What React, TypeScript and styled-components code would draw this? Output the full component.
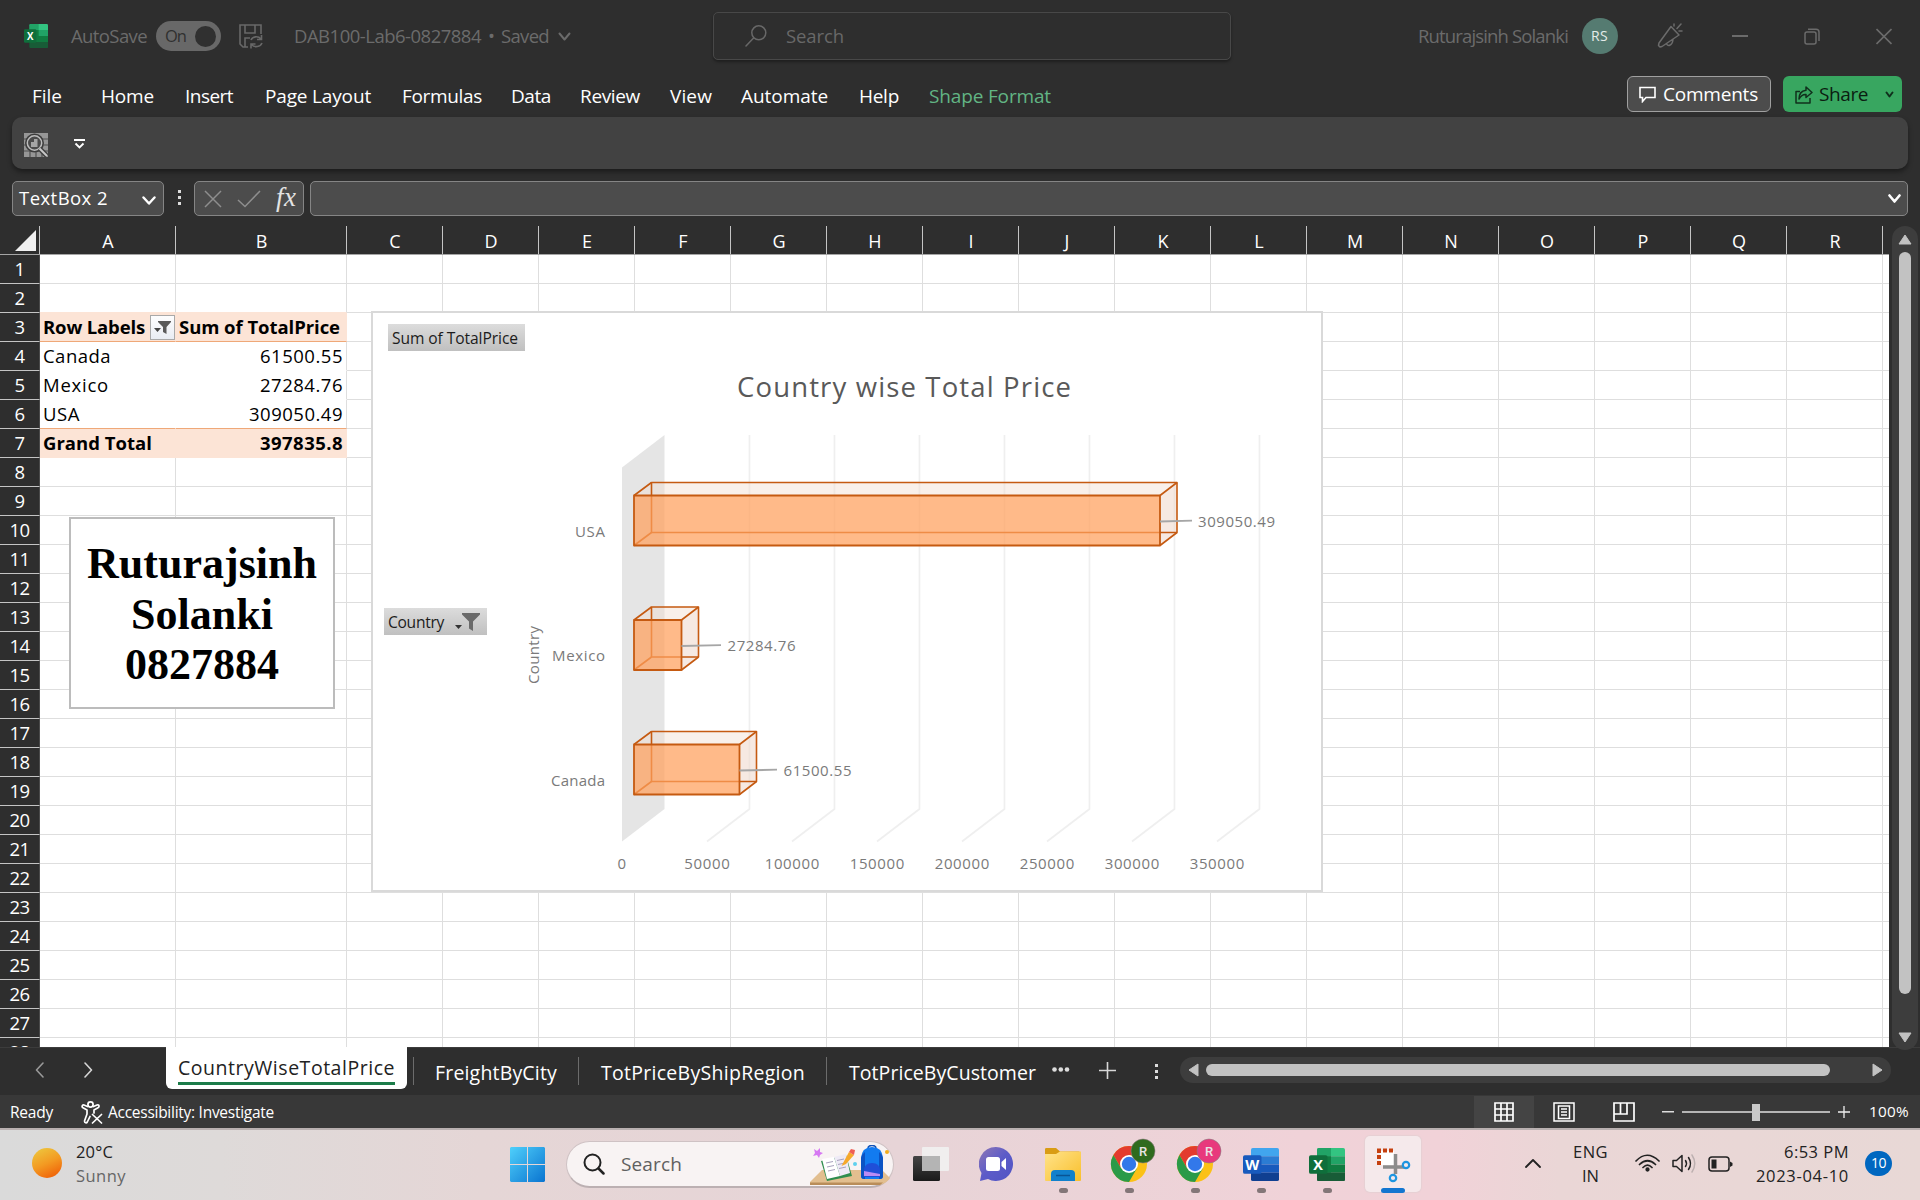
import React, { useLayoutEffect, useRef } from "react";
import styled, { createGlobalStyle, css } from "styled-components";

const UI = `"Open Sans", "Noto Sans", "Liberation Sans", sans-serif`;
const SHEET = `"Open Sans", "Noto Sans", sans-serif`;

const Global = createGlobalStyle`
  * { box-sizing: border-box; }
  html, body { margin: 0; padding: 0; background: #2e2e2e; overflow: hidden; }
  svg { display: block; flex: none; }
`;

/* ---------- text that is tracked to a given width ---------- */

const TextSpan = styled.span<{ $w: number; $size: number; $gap: number; $weight: number; $color: string; $font: string }>`
  display: block;
  flex: none;
  width: ${p => p.$w}px;
  margin-left: ${p => p.$gap}px;
  font-family: ${p => p.$font};
  font-size: ${p => p.$size}px;
  font-weight: ${p => p.$weight};
  color: ${p => p.$color};
  white-space: nowrap;
  line-height: 1.3;
`;

type LabelProps = { w: number; size?: number; gap?: number; weight?: number; color?: string; font?: string; children: string };

function Label({ w, size = 18.5, gap = 0, weight = 400, color = "#fff", font = UI, children }: LabelProps) {
  const ref = useRef<HTMLSpanElement>(null);
  useLayoutEffect(() => {
    const el = ref.current!;
    el.style.letterSpacing = "0px";
    const natural = el.getBoundingClientRect().width;
    el.style.letterSpacing = `${(w - natural) / children.length}px`;
  }, [w, children]);
  return (
    <TextSpan $w={w} $size={size} $gap={gap} $weight={weight} $color={color} $font={font}>
      <span ref={ref}>{children}</span>
    </TextSpan>
  );
}

/* ---------- window chrome ---------- */

const Screen = styled.div`
  width: 1920px;
  height: 1200px;
  display: flex;
  flex-direction: column;
  background: #2e2e2e;
  font-family: ${UI};
  overflow: hidden;
`;

const TitleBar = styled.header`
  height: 72px;
  display: flex;
  align-items: center;
  padding-left: 24px;
`;

const Spaced = styled.div<{ $gap: number; $dy?: number }>`
  flex: none;
  margin-left: ${p => p.$gap}px;
  padding-top: ${p => p.$dy ?? 0}px;
`;

const Toggle = styled.div`
  width: 65px;
  height: 30px;
  margin-left: 9px;
  border-radius: 15px;
  background: #686868;
  display: flex;
  align-items: center;
  flex: none;
`;

const Knob = styled.i`
  width: 21px;
  height: 21px;
  margin-left: 9px;
  border-radius: 50%;
  background: #303030;
`;

const SearchBox = styled.div`
  width: 518px;
  height: 48px;
  margin-left: 142px;
  flex: none;
  border: 1px solid #484848;
  border-radius: 5px;
  box-shadow: 0 2px 3px rgba(0, 0, 0, 0.35);
  display: flex;
  align-items: center;
  padding-left: 31px;
`;

const Avatar = styled.div`
  width: 36px;
  height: 36px;
  margin-left: 14px;
  border-radius: 50%;
  background: #557b71;
  display: flex;
  align-items: center;
  flex: none;
`;

const MenuBar = styled.nav`
  height: 45px;
  display: flex;
  align-items: flex-start;
  padding-left: 32px;
`;

const MenuItem = styled.div`
  padding-top: 12px;
  display: flex;
`;

const PillButton = styled.div<{ $w: number; $green?: boolean; $gap: number; $pad: number }>`
  width: ${p => p.$w}px;
  height: 36px;
  margin: 4px 0 0 ${p => p.$gap}px;
  padding-left: ${p => p.$pad}px;
  padding-top: 1px;
  display: flex;
  align-items: center;
  flex: none;
  border-radius: 6px;
  background: ${p => (p.$green ? "#38a660" : "#4c4c4c")};
  border: ${p => (p.$green ? "none" : "1px solid #a0a0a0")};
`;

const QuickBar = styled.div`
  height: 52px;
  margin: 0 12px;
  padding-left: 12px;
  display: flex;
  align-items: center;
  background: #424242;
  border-radius: 10px;
  box-shadow: 0 3px 5px rgba(0, 0, 0, 0.4);
`;

const FormulaRow = styled.div`
  height: 57px;
  padding: 12px 12px 10px;
  display: flex;
`;

const Field = styled.div<{ $w?: number }>`
  ${p => (p.$w ? css`width: ${p.$w}px; flex: none;` : css`flex: 1;`)}
  height: 35px;
  border: 1px solid #858585;
  border-radius: 5px;
  background: #4c4c4c;
  display: flex;
  align-items: center;
`;

const FieldDots = styled.div`
  width: 30px;
  padding-left: 1px;
  display: grid;
  place-items: center;
`;

const Fx = styled.span`
  margin: -4px 0 0 15px;
  font: italic 27px/30px "Liberation Serif", serif;
  letter-spacing: 0.5px;
  color: #e3e3e3;
`;

/* ---------- sheet ---------- */

const COLS = "ABCDEFGHIJKLMNOPQR".split("");
const TRACKS = "40px 136px 171px repeat(16, 96px) 6px";

const Workspace = styled.div`
  display: flex;
  height: 821px;
  position: relative;
  flex: none;
`;

const Sheet = styled.div`
  width: 1889px;
  height: 821px;
  overflow: hidden;
`;

const HeadRow = styled.div`
  display: grid;
  grid-template-columns: ${TRACKS};
  grid-template-rows: 28px;
  height: 29px;
  border-bottom: 1px solid #a5a5a5;
`;

const HeadCell = styled.div`
  border-right: 1px solid #c4c4c4;
  padding-left: 1px;
  color: #fff;
  font-size: 18px;
  line-height: 31px;
  text-align: center;
  &:first-child { padding-left: 0; }
  &:last-child { border-right: 0; }
`;

const Row = styled.div`
  display: grid;
  grid-template-columns: ${TRACKS};
  grid-template-rows: 29px;
  height: 29px;
  background: #fff;
`;

const RowHead = styled.div`
  background: #2e2e2e;
  color: #fff;
  border-bottom: 1px solid #c4c4c4;
  border-right: 1px solid #4a4a4a;
  font-size: 18.5px;
  line-height: 28px;
  text-align: center;
  letter-spacing: -0.6px;
`;

const Cell = styled.div<{ $fill?: boolean; $bottom?: string; $right?: string; $end?: boolean }>`
  display: flex;
  align-items: center;
  justify-content: ${p => (p.$end ? "flex-end" : "flex-start")};
  padding: 1px 3px 0;
  background: ${p => (p.$fill ? "#fce4d6" : "#fff")};
  border-bottom: 1px solid ${p => p.$bottom ?? "#dedede"};
  border-right: 1px solid ${p => p.$right ?? "#dedede"};
  &:last-child { border-right: 0; }
`;

const FilterButton = styled.div`
  width: 25px;
  height: 25px;
  margin: 0 -4px 0 5px;
  border: 1px solid #a9a9a9;
  background: linear-gradient(#fdfdfe, #e9edf3);
  display: grid;
  place-items: center;
  flex: none;
`;

const ScrollV = styled.div`
  width: 26px;
  height: 824px;
  margin-left: 3px;
  border-radius: 13px;
  background: #3d3d3d;
  display: flex;
  flex-direction: column;
  align-items: center;
  padding-top: 8px;
  z-index: 1;
`;

const ThumbV = styled.div`
  width: 12px;
  height: 742px;
  margin: 7px 0 38px;
  border-radius: 6px;
  background: #c2c2c2;
  flex: none;
`;

const TextBox = styled.div`
  position: absolute;
  left: 69px;
  top: 291px;
  width: 266px;
  height: 192px;
  border: 2px solid #bcbcbc;
  background: #fff;
  display: flex;
  flex-direction: column;
  align-items: center;
  padding-top: 20px;
  font: bold 44px/50.5px "Liberation Serif", serif;
  color: #000;
`;

const ChartFrame = styled.div`
  position: absolute;
  left: 371px;
  top: 85px;
  width: 952px;
  height: 581px;
  border: 2px solid #d9d9d9;
  background: #fff;
`;

const ChartButton = styled.div<{ $x: number; $y: number; $w: number }>`
  position: absolute;
  left: ${p => p.$x}px;
  top: ${p => p.$y}px;
  width: ${p => p.$w}px;
  height: 27px;
  padding: 1px 0 0 4px;
  display: flex;
  align-items: center;
  background: linear-gradient(#dcdcdc, #c0c0c0);
`;

/* ---------- tabs, status ---------- */

const TabBar = styled.div`
  height: 48px;
  display: flex;
  align-items: flex-start;
  background: #2e2e2e;
  border-top: 1px solid #3c3c3c;
`;

const ActiveTab = styled.div`
  width: 241px;
  height: 42px;
  margin: -1px 0 0 66px;
  padding: 8px 12px 0;
  border-radius: 0 0 6px 6px;
  background: #fff;
  flex: none;
`;

const Underline = styled.div`
  height: 3px;
  width: 217px;
  margin-top: 2px;
  background: #1c7c49;
`;

const Divider = styled.i<{ $gap: number }>`
  width: 1px;
  height: 28px;
  margin: 9px 0 0 ${p => p.$gap}px;
  background: #6c6c6c;
  flex: none;
`;

const TabSlot = styled.div`
  padding-top: 12px;
`;

const ScrollH = styled.div`
  width: 711px;
  height: 26px;
  margin: 9px 0 0 21px;
  padding: 0 8px;
  border-radius: 13px;
  background: #3d3d3d;
  display: flex;
  align-items: center;
  flex: none;
`;

const ThumbH = styled.div`
  width: 624px;
  height: 12px;
  margin: 0 42px 0 7px;
  border-radius: 6px;
  background: #c2c2c2;
  flex: none;
`;

const StatusBar = styled.div`
  height: 33px;
  display: flex;
  align-items: center;
  background: #383838;
  padding: 1px 0 0 10px;
`;

const ViewButton = styled.div<{ $on?: boolean }>`
  width: 60px;
  height: 32px;
  display: grid;
  place-items: center;
  background: ${p => (p.$on ? "#444" : "transparent")};
`;

const Slider = styled.div`
  width: 148px;
  height: 17px;
  margin-left: 8px;
  display: grid;
  place-items: center;
  background: linear-gradient(#b5b5b5, #b5b5b5) center / 100% 2px no-repeat;
`;

const Handle = styled.i`
  width: 8px;
  height: 17px;
  background: #c9c9c9;
`;

/* ---------- taskbar ---------- */

const Taskbar = styled.footer`
  height: 72px;
  display: flex;
  border-top: 2px solid #b9b0b0;
  background: linear-gradient(90deg, #dadada 0, #dedad9 220px, #e5d6d6 480px, #e7d4d7 900px, #f0d2d8 1300px, #f1d2d8 1440px, #ead6d6 1560px, #e8d8d6 1920px);
`;

const Sun = styled.div`
  width: 30px;
  height: 30px;
  margin: 18px 0 0 32px;
  border-radius: 50%;
  background: linear-gradient(155deg, #eec23b 10%, #f39a22 50%, #f0690c 85%);
`;

const Lines = styled.div<{ $gap: number; $w: number; $align?: string }>`
  width: ${p => p.$w}px;
  margin-left: ${p => p.$gap}px;
  padding-top: 11px;
  display: flex;
  flex-direction: column;
  gap: 3px;
  align-items: ${p => p.$align ?? "flex-start"};
  flex: none;
`;

const TaskSearch = styled.div`
  width: 328px;
  height: 47px;
  margin: 11px 0 0 21px;
  border: 1px solid #cfc2c4;
  border-bottom: 2px solid #bcb0b2;
  border-radius: 24px;
  background: #f8f3f3;
  display: flex;
  align-items: center;
  padding-left: 16px;
  flex: none;
`;

const TaskApp = styled.div<{ $gap?: number; $w: number; $active?: boolean }>`
  width: ${p => p.$w}px;
  height: 56px;
  margin: 6px 0 0 ${p => p.$gap ?? 0}px;
  display: flex;
  flex-direction: column;
  align-items: center;
  justify-content: space-between;
  flex: none;
  ${p => p.$active && css`
    background: #f5e9eb;
    border-radius: 5px;
    box-shadow: 0 0 1px 1px #e6d0d4;
  `}
`;

const Running = styled.i<{ $active?: boolean }>`
  width: ${p => (p.$active ? 24 : 9)}px;
  height: 5px;
  border-radius: 3px;
  margin-bottom: -1px;
  background: ${p => (p.$active ? "#1376d0" : "#837678")};
`;

const Count = styled.div`
  width: 27px;
  height: 25px;
  margin: 21px 0 0 16px;
  border-radius: 13px;
  background: #0067c0;
  display: grid;
  place-items: center;
`;

/* ---------- icons ---------- */

const Chevron = ({ w, h, color = "#fff", sw = 2, dir = "down" }: { w: number; h: number; color?: string; sw?: number; dir?: string }) => {
  const d = {
    down: `M1.5 1.5L${w / 2} ${h - 1.5}L${w - 1.5} 1.5`,
    up: `M1 ${h - 1}L${w / 2} 1L${w - 1} ${h - 1}`,
    left: `M${w - 1} 1L1.5 ${h / 2}L${w - 1} ${h - 1}`,
    right: `M1 1L${w - 1.5} ${h / 2}L1 ${h - 1}`,
  }[dir];
  return <svg width={w} height={h}><path d={d} fill="none" stroke={color} strokeWidth={sw} strokeLinecap="round" strokeLinejoin="round" /></svg>;
};

const OfficeIcon = ({ w, h, letter, c }: { w: number; h: number; letter: string; c: string[] }) => (
  <svg width={w} height={h} viewBox="0 2 36 32" preserveAspectRatio="none">
    <clipPath id={`sheet${letter}${w}`}><rect x="8" y="2" width="28" height="32" rx="1.8" /></clipPath>
    <g clipPath={`url(#sheet${letter}${w})`}>
      <rect x="8" y="2" width="28" height="8" fill={c[0]} />
      <rect x="8" y="10" width="28" height="8" fill={c[1]} />
      <rect x="8" y="18" width="28" height="8" fill={c[2]} />
      <rect x="8" y="26" width="28" height="8" fill={c[3]} />
      {letter === "X" && <><rect x="8" y="2" width="14" height="8" fill="#21a366" /><rect x="8" y="10" width="14" height="16" fill="#107c41" /><rect x="8" y="26" width="28" height="8" fill="#185c37" /></>}
    </g>
    <rect x="0" y="9" width="18.500" height="18" rx="1.8" fill={c[4]} />
    <text x="9.2" y="23.2" textAnchor="middle" fontFamily="Open Sans, sans-serif" fontWeight="700" fontSize="14.5" fill="#fff">{letter}</text>
  </svg>
);
const XL = ["#33c481", "#21a366", "#107c41", "#185c37", "#0f6e3b"];
const WD = ["#41a5ee", "#2b7cd3", "#185abd", "#103f91", "#185abd"];

const SaveIcon = () => (
  <svg width="24" height="25" fill="none" stroke="#686868" strokeWidth="1.6">
    <path d="M9 23H4L1 20V1H22V10M6 1V9H16V1M6 23V14H11" />
    <path d="M12 16C13.5 12.5 19 11.5 22 15M22.5 11V15.5H18M23 19C21.5 23 15.5 24 12.5 20.5M12 24.5V20H16.5" />
  </svg>
);

const Lens = ({ color, flip, size = 22, sw = 1.5 }: { color: string; flip?: boolean; size?: number; sw?: number }) => (
  <svg width={size} height={size} viewBox="0 0 22 22" fill="none" stroke={color} strokeWidth={sw} strokeLinecap="round">
    {flip ? <><circle cx="13.8" cy="7.8" r="7" /><path d="M8.6 13L1 21" /></> : <><circle cx="9.5" cy="9.5" r="8" /><path d="M15.5 15.5L20.5 20.5" strokeWidth={sw + 0.5} /></>}
  </svg>
);

const Megaphone = () => (
  <svg width="26" height="26" fill="none" stroke="#6b6b6b" strokeWidth="1.5" strokeLinejoin="round" strokeLinecap="round">
    <path d="M14 3.5L22 12L5 23.5L3 24L1.5 22.5L2 20ZM9.5 20.5C10 23.5 15.5 23.5 16 16M17 3V1M20 5.5L24 1M22 8H25" />
  </svg>
);

const ChartLens = () => (
  <svg width="24" height="24" fill="none">
    <rect width="24" height="24" fill="#969696" />
    <path d="M0 6H24M0 12H24M0 18H24M6 18V24M12 18V24M18 18V24" stroke="#505050" strokeWidth="1.2" />
    <circle cx="10.5" cy="10" r="8" fill="#4b4b4b" stroke="#3d3d3d" strokeWidth="3" />
    <circle cx="10.5" cy="10" r="7.2" stroke="#bdbdbd" strokeWidth="1.5" />
    <path d="M7 14V9H10V6H13.5V14Z" fill="#a5a5a5" />
    <path d="M15.5 15.5L23 23" stroke="#424242" strokeWidth="5" />
    <path d="M15.5 15.5L23 23" stroke="#c8c8c8" strokeWidth="2" />
  </svg>
);

const Funnel = ({ w, h, color }: { w: number; h: number; color: string }) => (
  <svg width={w} height={h} viewBox="0 0 18 18"><path d="M0 0H18V1.5L11 8.5V18L7 15.5V8.5L0 1.5Z" fill={color} /></svg>
);

const Access = () => (
  <svg width="22" height="23" fill="none" stroke="#fff" strokeWidth="1.7" strokeLinejoin="round" strokeLinecap="round">
    <circle cx="9.5" cy="3.5" r="2.6" />
    <path d="M6.5 5.5L3 4C1 3.5 .5 6 2 6.8L6 9V13L3.5 20C3.5 22 5.5 22.5 6.3 21L9 15.5M12.5 5.5L16 4C18.5 3.5 18.5 6 17 6.8L13 9V12M11.5 13.5L20.5 22M20.5 13.5L11.5 22" />
  </svg>
);

const Chrome = ({ badge }: { badge: string }) => (
  <svg width="50" height="46" viewBox="0 0 50 46">
    <g transform="translate(21 28)">
      <circle r="18" fill="#fbc116" />
      <path d="M-15.6 -9A18 18 0 0 1 15.6 -9L0 -9L-7.8 4.5Z" fill="#e33b2e" />
      <path d="M-15.6 -9A18 18 0 0 0 0 18L7.8 4.5L-7.8 4.5Z" fill="#2a9a48" />
      <circle r="9" fill="#fff" /><circle r="7.2" fill="#3278ea" />
    </g>
    <circle cx="35" cy="15" r="12" fill={badge} stroke="#8c7a80" strokeWidth=".6" />
    <text x="35" y="19.8" textAnchor="middle" fontFamily="Roboto, sans-serif" fontWeight="500" fontSize="13" fill="#e9e4e4">R</text>
  </svg>
);

const SearchArt = () => (
  <svg width="84" height="42" viewBox="0 0 84 42">
    <path d="M12 25H72L80 33Q77 38 70 40H0V37Z" fill="#e2be8f" />
    <path d="M0 37.5H73L70 40H0Z" fill="#b98d5a" />
    <path d="M11 16L36 10L42 31L17 36Z" fill="#2f8d4e" />
    <path d="M12 14L24 12L30 31L17 34Z" fill="#fff" /><path d="M24 12L36 9L40 28L30 31Z" fill="#eeeaf6" />
    <path d="M16 18L23 16.5M17 22L24 20.5M18 26L25 24.5M27 15.5L34 14M28 19.5L35 18M29 23.5L36 22" stroke="#a7a1bd" strokeWidth="1" />
    <path d="M32 20L39 7L44 10L36 19L31.5 21Z" fill="#f6a92c" /><path d="M39 7L41 4L45 5L44 10Z" fill="#ef5e55" />
    <path d="M4 4L7 6L10 3L10 7L13 8L10 10L9 13L7 10L3 11L5 8Z" fill="#d678f2" />
    <circle cx="45" cy="19" r="2" fill="#5fd0ee" /><circle cx="77" cy="7" r="2" fill="#f3ad1c" />
    <path d="M58 3.500Q58 0.500 62 0.500T66 3.500" fill="none" stroke="#1152b8" strokeWidth="1.6" />
    <path d="M51 13Q52 2 62 2T73 13V31Q73 34 70 34H54Q51 34 51 31Z" fill="#127bf0" />
    <path d="M51 13V31Q51 34 54 34H55V7Q52 9 51 13ZM69 7V34H70Q73 34 73 31V13Q72 9 69 7Z" fill="#0b53c4" />
    <path d="M54 26Q54 18 62 18T70 26V32H54Z" fill="#1f4fd8" /><path d="M54 26L70 29V31H54Z" fill="#b98cf4" />
  </svg>
);

/* ---------- chart ---------- */

const BARS = [
  { name: "USA", nameW: 30, y: 495.5, end: 1160, value: "309050.49", lx: 1192, vx: 1198, vw: 77 },
  { name: "Mexico", nameW: 53, y: 620, end: 681.5, value: "27284.76", lx: 721, vx: 727.5, vw: 68 },
  { name: "Canada", nameW: 54, y: 744.5, end: 739.5, value: "61500.55", lx: 777, vx: 783.5, vw: 68 },
];

const ChartText = styled.text`
  font-family: ${SHEET};
  font-size: 15px;
  fill: #7a7a7a;
`;

const ChartTitle = styled.text`
  font-family: ${SHEET};
  font-size: 27.5px;
  fill: #595959;
`;

const Plot = () => (
  <svg width="948" height="577" viewBox="373 313 948 577">
    <ChartTitle x="737" y="396.5" textLength="334">Country wise Total Price</ChartTitle>
    <path d="M622 467.5L664.5 435V809L622 841.5Z" fill="#e5e5e5" />
    {[1, 2, 3, 4, 5, 6, 7].map(i => (
      <path key={i} d={`M${664 + 85 * i}.5 435V809L${622 + 85 * i} 841.5`} fill="none" stroke="#efefef" strokeWidth="1.7" />
    ))}
    {BARS.map(b => {
      const back = `M651.5 ${b.y - 13}H${b.end + 17}V${b.y + 37}H651.5Z`;
      return (
        <g key={b.name} strokeLinejoin="round">
          <path d={`M634 ${b.y}L651.5 ${b.y - 13}H${b.end + 17}V${b.y + 37}L${b.end} ${b.y + 50}V${b.y}Z`} fill="#f0dccd" fillOpacity=".42" />
          <path d={`M${b.end} ${b.y}L${b.end + 17} ${b.y - 13}V${b.y + 37}L${b.end} ${b.y + 50}Z`} fill="#eedbcf" fillOpacity=".3" />
          <path d={back} fill="none" stroke="#c55a11" strokeWidth="1.6" />
          <path d={`M634 ${b.y}L651.5 ${b.y - 13}M634 ${b.y + 50}L651.5 ${b.y + 37}`} stroke="#c55a11" strokeWidth="1.6" />
          <rect x="634" y={b.y} width={b.end - 634} height="50" fill="#ff9f5c" fillOpacity=".72" stroke="#c55a11" strokeWidth="1.8" />
          <path d={`M${b.end} ${b.y}l17 -13M${b.end} ${b.y + 50}l17 -13`} stroke="#c55a11" strokeWidth="1.6" />
          <path d={`M${b.end} ${b.y + 26}L${b.lx} ${b.y + 25.2}`} stroke="#a6a6a6" strokeWidth="1.8" />
          <ChartText x={b.vx} y={b.y + 31} textLength={b.vw}>{b.value}</ChartText>
          <ChartText x={605 - b.nameW} y={b.y + 41} textLength={b.nameW}>{b.name}</ChartText>
        </g>
      );
    })}
    {[0, 1, 2, 3, 4, 5, 6, 7].map(i => {
      const t = String(i * 50000);
      const w = t.length * 9.1;
      return <ChartText key={i} x={622 + 85 * i - w / 2} y="869" textLength={w}>{t}</ChartText>;
    })}
    <ChartText transform="translate(539 684) rotate(-90)" textLength="58">Country</ChartText>
  </svg>
);

/* ---------- page ---------- */

const ORANGE = "#efa878";
const PEACH = "#fce4d6";

function PivotCells({ row }: { row: number }) {
  const cell = (t: string, w: number, bold = false) => <Label w={w} size={18.5} weight={bold ? 700 : 400} color="#000" font={SHEET}>{t}</Label>;
  if (row === 2) return <><Cell $bottom={PEACH} /><Cell $bottom={PEACH} /></>;
  if (row === 3)
    return (
      <>
        <Cell $fill $bottom={ORANGE} $right={PEACH}>
          {cell("Row Labels", 102, true)}
          <FilterButton>
            <svg width="17" height="15"><path d="M0 8H7L3.5 12Z" fill="#444" /><path d="M4 1H17V2L12.5 7V14L9 12V7L4 2Z" fill="#5a5a5a" /></svg>
          </FilterButton>
        </Cell>
        <Cell $fill $bottom={ORANGE} $right={PEACH}>{cell("Sum of TotalPrice", 161, true)}</Cell>
      </>
    );
  if (row === 7)
    return <><Cell $fill $bottom={PEACH} $right={PEACH}>{cell("Grand Total", 109, true)}</Cell><Cell $fill $end $bottom={PEACH} $right={PEACH}>{cell("397835.8", 83, true)}</Cell></>;
  const data: Record<number, [string, number, string, number]> = {
    4: ["Canada", 68, "61500.55", 83],
    5: ["Mexico", 66, "27284.76", 83],
    6: ["USA", 37, "309050.49", 94],
  };
  const d = data[row];
  if (!d) return <><Cell /><Cell /></>;
  const bottom = row === 6 ? ORANGE : "#fff";
  return <><Cell $bottom={bottom} $right="#fff">{cell(d[0], d[1])}</Cell><Cell $end $bottom={bottom}>{cell(d[2], d[3])}</Cell></>;
}

const MENU: [string, number, number][] = [
  ["File", 30, 0], ["Home", 53, 39], ["Insert", 48, 31], ["Page Layout", 106, 32], ["Formulas", 80, 31], ["Data", 40, 29],
  ["Review", 60, 29], ["View", 42, 30], ["Automate", 87, 29], ["Help", 40, 31],
];

export default function App() {
  const dim = "#6b6b6b";
  return (
    <>
      <Global />
      <Screen>
        <TitleBar>
          <OfficeIcon w={24} h={24} letter="X" c={XL} />
          <Label w={76} gap={23} color={dim}>AutoSave</Label>
          <Toggle><Label w={21} gap={9} size={16.5} color="#303030">On</Label><Knob /></Toggle>
          <Spaced $gap={18}><SaveIcon /></Spaced>
          <Label w={187} gap={31} color={dim}>DAB100-Lab6-0827884</Label>
          <Label w={6} gap={7} color={dim}>•</Label>
          <Label w={48} gap={7} color={dim}>Saved</Label>
          <Spaced $gap={9}><Chevron w={13} h={9} color={dim} /></Spaced>
          <SearchBox><Lens flip color="#686868" /><Label w={58} gap={19} color="#686868">Search</Label></SearchBox>
          <Label w={150} gap={187} color={dim}>Ruturajsinh Solanki</Label>
          <Avatar><Label w={17} gap={9} size={14} color="#e4ebe9">RS</Label></Avatar>
          <Spaced $gap={39}><Megaphone /></Spaced>
          <Spaced $gap={49}><svg width="16" height="2"><rect width="16" height="2" fill={dim} /></svg></Spaced>
          <Spaced $gap={56}>
            <svg width="16" height="17" fill="none" stroke={dim} strokeWidth="1.5"><rect x="1" y="4" width="11" height="12" rx="2" /><path d="M4 1.2H12Q15 1.2 15 4V13" /></svg>
          </Spaced>
          <Spaced $gap={56}><svg width="16" height="17" stroke={dim} strokeWidth="1.7"><path d="M0.5 1L15.5 16M15.5 1L0.5 16" /></svg></Spaced>
        </TitleBar>

        <MenuBar>
          {MENU.map(([t, w, g]) => <MenuItem key={t}><Label w={w} gap={g} size={19}>{t}</Label></MenuItem>)}
          <MenuItem><Label w={122} gap={30} size={19} color="#62b584">Shape Format</Label></MenuItem>
          <PillButton $w={144} $gap={576} $pad={11}>
            <svg width="17" height="17" fill="none" stroke="#fff" strokeWidth="1.6"><path d="M1 1.5H16V11.5H7L3.5 15.5V11.5H1Z" /></svg>
            <Label w={95} gap={7} size={19}>Comments</Label>
          </PillButton>
          <PillButton $green $w={119} $gap={12} $pad={12}>
            <svg width="18" height="18" fill="none" stroke="#10301c" strokeWidth="1.5" strokeLinejoin="round"><path d="M5 5.5H1V17H15V12M11 1L17 6.5L11 11.5V8.5Q7 8 4 13Q4 5 11 4.2Z" /></svg>
            <Label w={49} gap={6} size={19} color="#0b1d11">Share</Label>
            <Spaced $gap={17}><Chevron w={9} h={7} color="#10301c" /></Spaced>
          </PillButton>
        </MenuBar>

        <QuickBar>
          <Spaced $gap={0} $dy={3}><ChartLens /></Spaced>
          <Spaced $gap={26} $dy={2}><svg width="11" height="10" fill="none" stroke="#fff" strokeWidth="1.8"><path d="M0 1H11M1.5 4.5L5.5 8.5L9.5 4.5" /></svg></Spaced>
        </QuickBar>

        <FormulaRow>
          <Field $w={152}><Label w={89} gap={6} size={18.5}>TextBox 2</Label><Spaced $gap={34} $dy={3}><Chevron w={14} h={9} sw={2.4} /></Spaced></Field>
          <FieldDots><svg width="4" height="17" fill="#ddd"><rect width="3" height="3" /><rect y="6" width="3" height="3" /><rect y="12" width="3" height="3" /></svg></FieldDots>
          <Field $w={110}>
            <Spaced $gap={9}><svg width="18" height="18" stroke="#8e8e8e" strokeWidth="1.5"><path d="M1 1L17 17M17 1L1 17" /></svg></Spaced>
            <Spaced $gap={15}><svg width="24" height="18" fill="none" stroke="#8e8e8e" strokeWidth="1.5"><path d="M1 10L8 16.5L23 1" /></svg></Spaced>
            <Fx>fx</Fx>
          </Field>
          <Spaced $gap={6} />
          <Field><Spaced $gap={1577}><Chevron w={13} h={9} sw={2.6} /></Spaced></Field>
        </FormulaRow>

        <Workspace>
          <Sheet>
            <HeadRow>
              <HeadCell><svg width="39" height="28"><path d="M36 4V25H15Z" fill="#f0f0f0" /></svg></HeadCell>
              {COLS.map(c => <HeadCell key={c}>{c}</HeadCell>)}
              <HeadCell />
            </HeadRow>
            {Array.from({ length: 28 }, (_, i) => i + 1).map(r => (
              <Row key={r}>
                <RowHead>{r}</RowHead>
                <PivotCells row={r} />
                {COLS.slice(2).map(c => <Cell key={c} />)}
                <Cell />
              </Row>
            ))}
          </Sheet>
          <ScrollV>
            <svg width="14" height="11"><path d="M7 1L13 10H1Z" fill="#c2c2c2" stroke="#c2c2c2" strokeLinejoin="round" /></svg>
            <ThumbV />
            <svg width="14" height="11"><path d="M7 10L13 1H1Z" fill="#c2c2c2" stroke="#c2c2c2" strokeLinejoin="round" /></svg>
          </ScrollV>
          <TextBox><span>Ruturajsinh</span><span>Solanki</span><span>0827884</span></TextBox>
          <ChartFrame>
            <Plot />
            <ChartButton $x={15} $y={11} $w={137}><Label w={126} size={15.6} color="#1c1c1c">Sum of TotalPrice</Label></ChartButton>
            <ChartButton $x={11} $y={295} $w={103}>
              <Label w={56} size={15.6} color="#1c1c1c">Country</Label>
              <Spaced $gap={11} $dy={10}><svg width="7" height="4"><path d="M0 0H7L3.5 4Z" fill="#333" /></svg></Spaced>
              <Funnel w={18} h={18} color="#6a6a6a" />
            </ChartButton>
          </ChartFrame>
        </Workspace>

        <TabBar>
          <Spaced $gap={35} $dy={14}><Chevron w={9} h={16} dir="left" color="#999" sw={1.6} /></Spaced>
          <Spaced $gap={40} $dy={14}><Chevron w={9} h={16} dir="right" color="#d5d5d5" sw={1.6} /></Spaced>
          <Spaced $gap={7} />
          <ActiveTab><Label w={217} size={19.5} color="#222">CountryWiseTotalPrice</Label><Underline /></ActiveTab>
          <Divider $gap={6} />
          <TabSlot><Label w={122} gap={21} size={19.5}>FreightByCity</Label></TabSlot>
          <Divider $gap={21} />
          <TabSlot><Label w={204} gap={22} size={19.5}>TotPriceByShipRegion</Label></TabSlot>
          <Divider $gap={21} />
          <TabSlot><Label w={187} gap={22} size={19.5}>TotPriceByCustomer</Label></TabSlot>
          <Spaced $gap={16} $dy={19}><svg width="18" height="5" fill="#ddd"><circle cx="2.5" cy="2.5" r="2.3" /><circle cx="8.8" cy="2.5" r="2.3" /><circle cx="15" cy="2.5" r="2.3" /></svg></Spaced>
          <Spaced $gap={29} $dy={14}><svg width="17" height="17" stroke="#d8d8d8" strokeWidth="1.6"><path d="M0 8.5H17M8.5 0V17" /></svg></Spaced>
          <Spaced $gap={39} $dy={16}><svg width="4" height="17" fill="#ddd"><rect width="3" height="3" /><rect y="6" width="3" height="3" /><rect y="12" width="3" height="3" /></svg></Spaced>
          <ScrollH>
            <svg width="11" height="14"><path d="M1 7L10 1V13Z" fill="#c2c2c2" stroke="#c2c2c2" strokeLinejoin="round" /></svg>
            <ThumbH />
            <svg width="11" height="14"><path d="M10 7L1 1V13Z" fill="#c2c2c2" stroke="#c2c2c2" strokeLinejoin="round" /></svg>
          </ScrollH>
        </TabBar>

        <StatusBar>
          <Label w={43} size={15.5}>Ready</Label>
          <Spaced $gap={28}><Access /></Spaced>
          <Label w={166} gap={5} size={15.5}>Accessibility: Investigate</Label>
          <Spaced $gap={1200} />
          <ViewButton $on><svg width="20" height="20" fill="none" stroke="#fff" strokeWidth="1.7"><path d="M1 1H19V19H1ZM7 1V19M13 1V19M1 7H19M1 13H19" /></svg></ViewButton>
          <ViewButton><svg width="22" height="20" fill="none" stroke="#fff" strokeWidth="1.5"><path d="M1 1H21V19H1ZM5.5 4H16.5V16.5H5.5ZM8 7H14M8 10H14M8 13H14" /></svg></ViewButton>
          <ViewButton><svg width="22" height="20" fill="none" stroke="#fff" strokeWidth="1.7"><path d="M1 1H21V19H1ZM1 12H14V1M7.5 1V12" /></svg></ViewButton>
          <Spaced $gap={8}><svg width="12" height="2"><rect width="12" height="1.5" fill="#ddd" /></svg></Spaced>
          <Slider><Handle /></Slider>
          <Spaced $gap={8}><svg width="12" height="12" stroke="#eee" strokeWidth="1.3"><path d="M0 6H12M6 0V12" /></svg></Spaced>
          <Label w={40} gap={19} size={15.3}>100%</Label>
        </StatusBar>

        <Taskbar>
          <Sun />
          <Lines $gap={14} $w={60}><Label w={37} size={16.5} color="#222">20°C</Label><Label w={50} size={16.5} color="#666">Sunny</Label></Lines>
          <Spaced $gap={374} $dy={17}>
            <svg width="35" height="35"><defs><linearGradient id="win" x1="0" y1="0" x2="1" y2="1" gradientUnits="objectBoundingBox"><stop offset="0" stopColor="#4fd0fb" /><stop offset="1" stopColor="#0a74d0" /></linearGradient></defs>
              <path d="M1 0H17V17H0V1ZM18 0H34L35 1V17H18ZM0 18H17V35H1L0 34ZM18 18H35V34L34 35H18Z" fill="url(#win)" /></svg>
          </Spaced>
          <TaskSearch><Lens color="#222" sw={2} /><Label w={61} gap={16} size={19} color="#606060">Search</Label><Spaced $gap={128} $dy={3}><SearchArt /></Spaced></TaskSearch>
          <Spaced $gap={19} $dy={17}>
            <svg width="37" height="35"><defs><linearGradient id="tv" x1="0" y1="0" x2="0" y2="1"><stop offset="0" stopColor="#444" /><stop offset="1" stopColor="#1a1a1a" /></linearGradient></defs>
              <rect y="9" width="27" height="25" rx="1.5" fill="url(#tv)" /><rect x="9" width="27" height="24" rx="1" fill="#f1f1f1" fillOpacity=".9" /><path d="M9 9H27V24H9Z" fill="#b4b4b4" /></svg>
          </Spaced>
          <Spaced $gap={29} $dy={17}>
            <svg width="34" height="35"><defs><linearGradient id="chat" x1="0" y1="0" x2="1" y2="1"><stop offset="0" stopColor="#8f78b5" /><stop offset=".5" stopColor="#5c5bc8" /><stop offset="1" stopColor="#5054c4" /></linearGradient></defs>
              <path d="M17 0A17 17 0 1 1 9 32L1 34L2.5 26A17 17 0 0 1 17 0Z" fill="url(#chat)" /><rect x="7" y="10" width="14" height="14" rx="2.5" fill="#fff" /><path d="M22.5 15L27 11V23L22.5 19Z" fill="#fff" /></svg>
          </Spaced>
          <TaskApp $gap={17} $w={66}>
            <Spaced $gap={0} $dy={12}>
              <svg width="36" height="33"><defs><linearGradient id="fold" x1="0" y1="0" x2="1" y2="1"><stop offset="0" stopColor="#ffe38a" /><stop offset="1" stopColor="#f9bf2c" /></linearGradient></defs>
                <path d="M0 1Q0 0 1.5 0H11L15 3.5H34L36 5V12H0Z" fill="#d99c14" /><path d="M0 6H11L15 3.5H36V32Q36 33 35 33H1Q0 33 0 32Z" fill="url(#fold)" /><path d="M6 33V26Q6 22 10 22H26Q30 22 30 26V33Z" fill="#1180cc" /><path d="M11 27.5H25" stroke="#0a5494" strokeWidth="1.5" /></svg>
            </Spaced>
            <Running />
          </TaskApp>
          <TaskApp $w={66}><Spaced $gap={8}><Chrome badge="#2f6b1e" /></Spaced><Running /></TaskApp>
          <TaskApp $w={66}><Spaced $gap={8}><Chrome badge="#e8397c" /></Spaced><Running /></TaskApp>
          <TaskApp $w={66}><Spaced $gap={-1} $dy={12}><OfficeIcon w={36} h={33} letter="W" c={WD} /></Spaced><Running /></TaskApp>
          <TaskApp $w={66}><Spaced $gap={-1} $dy={12}><OfficeIcon w={36} h={33} letter="X" c={XL} /></Spaced><Running /></TaskApp>
          <TaskApp $gap={5} $w={56} $active>
            <Spaced $gap={2} $dy={12}>
              <svg width="34" height="35" fill="none">
                <rect x="3" y="3" width="14" height="14" fill="#fff" />
                <path d="M2 17V4M0 2.500H17" stroke="#c5400f" strokeWidth="4" strokeDasharray="4 2" />
                <path d="M18.5 6V26M6 19H27" stroke="#8c8c8c" strokeWidth="3.5" />
                <circle cx="29" cy="17" r="3.2" stroke="#1e95e0" strokeWidth="2.2" /><circle cx="16" cy="30" r="3.2" stroke="#1e95e0" strokeWidth="2.2" />
              </svg>
            </Spaced>
            <Running $active />
          </TaskApp>
          <Spaced $gap={104} $dy={29}><Chevron w={16} h={9} dir="up" color="#222" sw={1.8} /></Spaced>
          <Lines $gap={31} $w={37} $align="center"><Label w={35} size={16.5} color="#222">ENG</Label><Label w={17} size={16.5} color="#222">IN</Label></Lines>
          <Spaced $gap={26} $dy={24}>
            <svg width="25" height="18" fill="none" stroke="#222" strokeWidth="1.7" strokeLinecap="round"><path d="M1 7Q12 -4.5 24 7M4.5 10.5Q12.5 3 20.5 10.5M8 13.5Q12.5 9 17 13.5" /><circle cx="12.5" cy="15.5" r="1.3" fill="#222" /></svg>
          </Spaced>
          <Spaced $gap={12} $dy={24}>
            <svg width="24" height="20" fill="none" stroke="#222" strokeWidth="1.5" strokeLinejoin="round" strokeLinecap="round"><path d="M1 6.5H4.5L10 1.5V17.5L4.5 12.5H1ZM13.5 6.5Q15.5 9.5 13.5 12.5M16.5 3.5Q20.5 9.5 16.5 15.5" /><path d="M20 1Q25.5 9.5 20 18" stroke="#bdb0b0" /></svg>
          </Spaced>
          <Spaced $gap={12} $dy={26}>
            <svg width="25" height="16" fill="none"><rect x="1" y="1" width="20" height="14" rx="3" stroke="#222" strokeWidth="1.5" /><rect x="3.5" y="3.5" width="5" height="9" fill="#222" /><path d="M22 5.5L24.5 7V9.5L22 11Z" fill="#222" /></svg>
          </Spaced>
          <Lines $gap={16} $w={100} $align="flex-end"><Label w={65} size={16.5} color="#222">6:53 PM</Label><Label w={93} size={16.5} color="#222">2023-04-10</Label></Lines>
          <Count><Label w={15} size={14}>10</Label></Count>
        </Taskbar>
      </Screen>
    </>
  );
}
